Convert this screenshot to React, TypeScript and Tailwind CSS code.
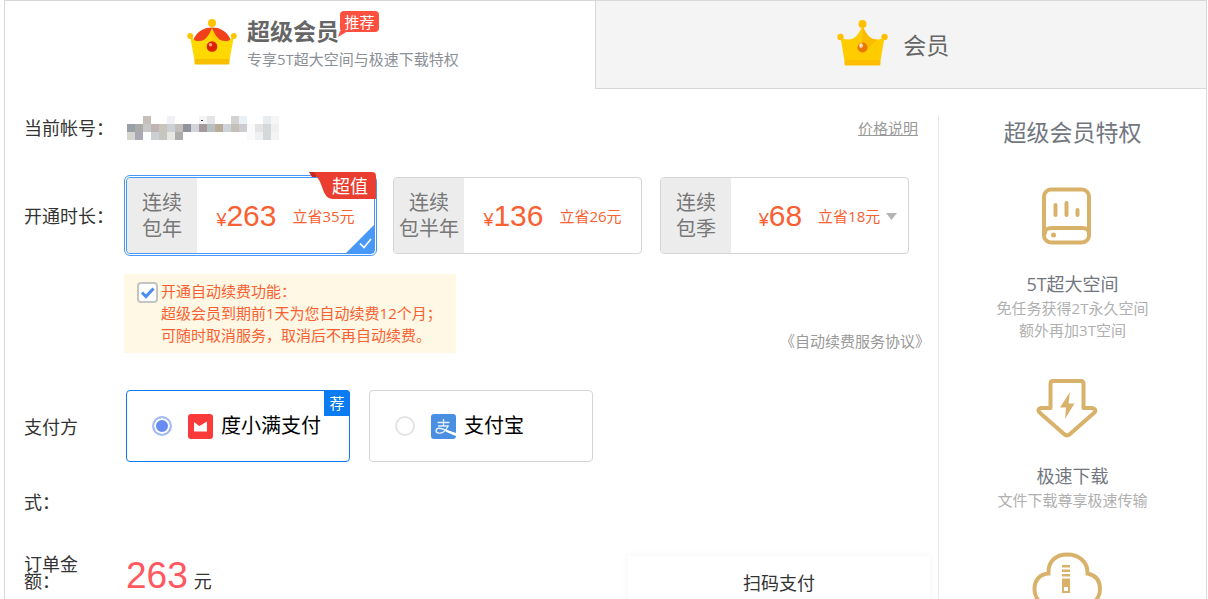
import { useState } from "react";
import type { ReactNode } from "react";

type Plan = {
  id: string;
  lines: [string, string];
  price: string;
  save: string;
  best?: boolean;
  more?: boolean;
};

const plans: Plan[] = [
  { id: "year", lines: ["连续", "包年"], price: "263", save: "立省35元", best: true },
  { id: "half", lines: ["连续", "包半年"], price: "136", save: "立省26元" },
  { id: "quarter", lines: ["连续", "包季"], price: "68", save: "立省18元", more: true },
];

function SuperCrown() {
  return (
    <svg viewBox="0 0 50 46" className="h-[46px] w-[50px]" aria-hidden="true">
      <path d="M6 22C9 13 16 8.500 25 8.500S41 13 44 22L25 25Z" fill="#f0401c" />
      <path d="M3 17L8 21.500Q13 23 17.500 20.500Q22 17 25 9Q28 17 32.500 20.500Q37 23 42 21.500L47 17L42.500 41H7.500Z" fill="#ffd800" />
      <path d="M25 9Q28 17 32.500 20.500L25 36Z" fill="#ffc400" opacity=".6" />
      <rect x="7.500" y="40" width="35" height="5.500" rx="1" fill="#f6c000" />
      <circle cx="25" cy="4" r="4" fill="#ffc400" />
      <circle cx="3.200" cy="17" r="3" fill="#ffc400" />
      <circle cx="46.800" cy="17" r="3" fill="#ffc400" />
      <circle cx="25" cy="27.500" r="5.300" fill="#dc2000" />
      <circle cx="23.500" cy="25.700" r="1.800" fill="#ff9c88" />
    </svg>
  );
}

function Crown() {
  return (
    <svg viewBox="0 0 51 46" className="h-[46px] w-[51px]" aria-hidden="true">
      <path d="M3.500 17Q6 19.500 11 19.500C18 19.500 21 15 25.500 6C30 15 33 19.500 40 19.500Q45 19.500 47.500 17L43.500 41H7.500Z" fill="#ffcc00" />
      <path d="M25.500 6C30 15 33 19.500 40 19.500L25.500 34Z" fill="#f9b000" opacity=".6" />
      <rect x="7.500" y="40" width="36" height="5.500" rx="1.500" fill="#ffbf00" />
      <circle cx="25.500" cy="4" r="4" fill="#ffc000" />
      <circle cx="3.500" cy="17" r="3.200" fill="#ffc000" />
      <circle cx="47.500" cy="17" r="3.200" fill="#ffc000" />
      <circle cx="25.500" cy="27.500" r="5" fill="#e87800" />
      <ellipse cx="24" cy="25.500" rx="1.800" ry="2.200" fill="#ffe0c8" />
    </svg>
  );
}

const mosaic: [number, number, string][] = [
  [2, 0, "#c5c0bb"], [5, 0, "#f1f1f5"], [9, 0, "#f4f4f4"], [10, 0, "#e4e4e6"], [13, 0, "#d2d2d2"],
  [14, 0, "#e9f0f6"], [17, 0, "#e8ecef"], [18, 0, "#f6f6f6"],
  [0, 1, "#98a0a8"], [1, 1, "#aaaaa8"], [2, 1, "#c8c8c8"], [3, 1, "#c0b4b4"],
  [4, 1, "#c8c6ba"], [5, 1, "#cccfd4"], [6, 1, "#c2bebd"], [7, 1, "#92929c"],
  [8, 1, "#d2d4dc"], [9, 1, "#a49a9a"], [10, 1, "#b8bec2"], [11, 1, "#b9ac98"],
  [12, 1, "#cdd4da"], [13, 1, "#c4c0b8"], [14, 1, "#cccbd0"], [15, 1, "#fafafb"],
  [16, 1, "#e4e4e4"], [17, 1, "#d4d8da"], [18, 1, "#f0f0f0"],
  [0, 2, "#d6d6d0"], [1, 2, "#aaa8b6"], [3, 2, "#cdd0d2"], [4, 2, "#c4c6c0"],
  [5, 2, "#e6e6e2"], [6, 2, "#acacac"], [15, 2, "#fafafa"], [16, 2, "#f0f0f2"],
  [17, 2, "#d4d8d8"], [18, 2, "#f4f4f4"],
];

function HiddenAccount() {
  return (
    <svg viewBox="0 0 152 24" className="h-6 w-[152px]" shapeRendering="crispEdges" aria-hidden="true">
      {mosaic.map(([x, y, fill]) => (
        <rect key={`${x}-${y}`} x={x * 8} y={y * 8} width="8" height="8" fill={fill} />
      ))}
      <rect x="74" y="4" width="2" height="1" fill="#333" />
    </svg>
  );
}

function PlanCard({ plan, checked, onSelect }: { plan: Plan; checked: boolean; onSelect: () => void }) {
  return (
    <label
      className={
        checked
          ? "relative flex h-[77px] w-[249px] cursor-pointer rounded-sm border border-[#4898f8] outline outline-offset-1 outline-[#4898f8]"
          : "relative flex h-[77px] w-[249px] cursor-pointer rounded border border-[#d5d5d5]"
      }
    >
      <input type="radio" name="plan" className="sr-only" checked={checked} onChange={onSelect} />
      <span className="flex w-[70px] shrink-0 flex-col items-center justify-center rounded-l-sm bg-[#ececec] text-xl leading-[26px] whitespace-nowrap text-[#777]">
        <span>{plan.lines[0]}</span>
        <span>{plan.lines[1]}</span>
      </span>
      <span className="flex flex-1 items-center justify-center gap-4 text-[#fa6032]">
        <span className="flex items-baseline font-['Liberation_Sans',sans-serif] text-[30px] leading-9">
          <span className="text-lg">¥</span>
          {plan.price}
        </span>
        <span className="relative pt-0.5 text-[15px]">
          {plan.save}
          {plan.more && (
            <svg viewBox="0 0 11 7" className="absolute top-2.5 left-full ml-1.5 h-[7px] w-[11px]" aria-hidden="true">
              <path d="M0 0H11L5.500 7Z" fill="#b4b4b4" />
            </svg>
          )}
        </span>
      </span>
      {plan.best && (
        <span className="absolute -top-1.5 -right-0.5 flex h-[27px] w-[67px] items-center justify-end pr-2 text-lg text-white">
          <svg viewBox="0 0 67 27" className="absolute inset-0 h-full w-full" aria-hidden="true">
            <path d="M0 0H63Q67 0 67 4V27H24C13 27 15 12 7 4Z" fill="#ea3e31" />
            <path d="M0 0H5L8 5H3Z" fill="#c42a20" />
          </svg>
          <span className="relative">超值</span>
        </span>
      )}
      {checked && (
        <svg viewBox="0 0 28 28" className="absolute right-0 bottom-0 h-7 w-7" aria-hidden="true">
          <path d="M28 0V28H0Z" fill="#4898f8" />
          <path d="M14 18.500L18 22.500L25 14" fill="none" stroke="#fff" strokeWidth="1.600" />
        </svg>
      )}
    </label>
  );
}

function PayOption({
  name, icon, checked, recommended, onSelect,
}: { name: string; icon: ReactNode; checked: boolean; recommended?: boolean; onSelect: () => void }) {
  return (
    <label
      className={
        checked
          ? "relative flex h-[72px] w-56 cursor-pointer items-center rounded-sm border border-[#0a7bf0] pl-[25px] text-xl text-black"
          : "relative flex h-[72px] w-56 cursor-pointer items-center rounded-sm border border-[#d5d5d5] pl-[25px] text-xl text-black"
      }
    >
      <input
        type="radio"
        name="pay"
        checked={checked}
        onChange={onSelect}
        className="mr-4 h-5 w-5 appearance-none rounded-full border-2 border-[#e4e4e4] bg-white checked:border-[#a6bcf6] checked:bg-[#668cf0] checked:shadow-[inset_0_0_0_2px_#fff]"
      />
      {icon}
      <span className="ml-2">{name}</span>
      {recommended && (
        <span className="absolute -top-px -right-px flex h-[26px] w-[26px] items-center justify-center rounded-tr-sm bg-[#0a7bf0] text-[15px] text-white">
          荐
        </span>
      )}
    </label>
  );
}

function DuIcon() {
  return (
    <svg viewBox="0 0 25 25" className="h-[25px] w-[25px]" aria-hidden="true">
      <rect width="25" height="25" rx="3" fill="#fb3a3a" />
      <path d="M6 8L10.500 11.500L11.500 12L19 7.500V17.500H6Z" fill="#fff" />
    </svg>
  );
}

function AliIcon() {
  return (
    <svg viewBox="0 0 25 25" className="h-[25px] w-[25px]" aria-hidden="true">
      <rect width="25" height="25" rx="3" fill="#4a90e2" />
      <g fill="none" stroke="#e4eefb" strokeLinecap="round">
        <path d="M7 8.500H18M12.500 5.500V12M7.500 12H17" strokeWidth="1.300" />
        <path d="M17 12C15 17 11 19.500 7.500 19C4 18.400 4.500 14.500 8 14.300C13 14.200 17 18 24 20" strokeWidth="1.400" />
      </g>
      <path d="M15 15.800L25 19V22C21 20.500 18 19 14.500 17.500Z" fill="#fff" />
    </svg>
  );
}

function DiskIcon() {
  return (
    <svg viewBox="0 0 50 58" className="h-[58px] w-[50px]" fill="none" stroke="#d8b26a" strokeLinecap="round" aria-hidden="true">
      <rect x="2" y="2.500" width="45" height="53" rx="7" strokeWidth="4" />
      <path d="M3 46C3 41 7 41 10 41H40C44 41 47 42 47 47" strokeWidth="4" />
      <path d="M13.500 18V28M24.500 16V28M35.500 23V28" strokeWidth="4" />
      <circle cx="11.500" cy="48" r="2.500" fill="#d8b26a" stroke="none" />
    </svg>
  );
}

function SpeedIcon() {
  return (
    <svg viewBox="0 0 62 60" className="h-[60px] w-[62px]" aria-hidden="true">
      <path
        d="M17 3H45Q47.500 3 47.500 6V30H56Q61 31 58.500 34.500L34 56Q31 59 28 56L3.500 34.500Q1 31 5 30H14.500V6Q14.500 3 17 3Z"
        fill="none" stroke="#d8b26a" strokeWidth="4" strokeLinejoin="round"
      />
      <path d="M34 14L24 29.500H30L29 41L38.500 25.500H32.500Z" fill="#d8b26a" />
    </svg>
  );
}

function CloudIcon() {
  return (
    <svg viewBox="0 0 70 60" className="h-[60px] w-[70px]" aria-hidden="true">
      <path
        d="M18 57C8 57 2.500 50 2.500 41C2.500 32 8 26 16.500 25.500C16 13 24 6.500 35.500 6.500C47 6.500 56 14 55.500 25.500C63 27 68 32 68 41C68 50 62 57 52 57Z"
        fill="none" stroke="#d8b26a" strokeWidth="4"
      />
      <path d="M30 17H38V19.500H30ZM30 21.500H38V24H30ZM30 26H38V28.500H30Z" fill="#d8b26a" />
      <path fillRule="evenodd" d="M30 30.500H38V45H30ZM32 39V43H36V39Z" fill="#d8b26a" />
    </svg>
  );
}

function Privilege({ icon, title, lines = [] }: { icon: ReactNode; title?: string; lines?: string[] }) {
  return (
    <li className="flex flex-col items-center">
      <span className="flex h-[60px] items-center justify-center pr-3">{icon}</span>
      {title && <h3 className="mt-[25px] text-lg leading-[26px] text-[#72777f]">{title}</h3>}
      {lines.map((line) => (
        <p key={line} className="text-[15px] leading-[22px] text-[#b0b0b0]">{line}</p>
      ))}
    </li>
  );
}

export default function App() {
  const [plan, setPlan] = useState("year");
  const [pay, setPay] = useState("du");
  const [renew, setRenew] = useState(true);

  return (
    <div className="h-screen overflow-hidden bg-white pr-px pl-1 font-['Open_Sans','Noto_Sans_CJK_SC',sans-serif] text-[#333]">
      <div className="flex min-h-full flex-col border-x border-t border-[#d8d8d8]">
        <nav className="flex h-[88px]">
          <button type="button" className="flex w-[49.1%] items-start justify-center gap-2.5 pt-[18px] pl-[46px] text-left">
            <SuperCrown />
            <span className="flex flex-col">
              <span className="relative self-start text-[23px] leading-6 font-bold text-[#666]">
                超级会员
                <span className="absolute -top-2 left-full ml-px flex h-[21px] w-[39px] items-center justify-center rounded-sm bg-[#ff5040] text-[15px] font-normal text-white">
                  <svg viewBox="0 0 10 6" className="absolute top-full -left-0.5 -mt-px h-1.5 w-2.5" aria-hidden="true">
                    <path d="M2 0H10L0 6Z" fill="#ff5040" />
                  </svg>
                  <span className="whitespace-nowrap">推荐</span>
                </span>
              </span>
              <span className="mt-[5px] text-[15px] leading-[22px] text-[#8b9096]">专享5T超大空间与极速下载特权</span>
            </span>
          </button>
          <button type="button" className="flex flex-1 items-start justify-center gap-[15px] border-b border-l border-[#d8d8d8] bg-[#f4f4f4] pt-[19px] pr-[15px] text-[23px] text-[#666]">
            <Crown />
            <span className="leading-[50px]">会员</span>
          </button>
        </nav>

        <div className="flex flex-1 pt-[26px]">
          <main className="flex-1 pr-2 pl-[19px]">
            <div className="flex h-[26px] items-center">
              <span className="w-[103px] text-lg whitespace-nowrap">当前帐号：</span>
              <HiddenAccount />
              <a href="#price" className="mr-3 ml-auto text-[15px] leading-5 text-[#999] underline">价格说明</a>
            </div>

            <div className="mt-9 flex items-center">
              <span className="w-[102px] text-lg whitespace-nowrap">开通时长：</span>
              <div className="flex gap-[18px]">
                {plans.map((p) => (
                  <PlanCard key={p.id} plan={p} checked={plan === p.id} onSelect={() => setPlan(p.id)} />
                ))}
              </div>
            </div>

            <div className="mt-5 flex items-end justify-between pl-[100px]">
              <label className="flex w-[332px] cursor-pointer items-start bg-[#fff8e4] pt-1.5 pb-[7px] pl-[13px] text-[15px] leading-[22px] whitespace-nowrap text-[#fa6032]">
                <span className="relative mt-0.5 mr-[3px] h-[21px] w-[21px] shrink-0">
                  <input
                    type="checkbox"
                    checked={renew}
                    onChange={() => setRenew(!renew)}
                    className="block h-full w-full appearance-none rounded border-2 border-[#c4c4c4] bg-white"
                  />
                  {renew && (
                    <svg viewBox="0 0 21 21" className="pointer-events-none absolute inset-0 h-full w-full" aria-hidden="true">
                      <path d="M5 10.500L9 14.500L16.500 6.500" fill="none" stroke="#4a8cf6" strokeWidth="3" />
                    </svg>
                  )}
                </span>
                <span>
                  开通自动续费功能：<br />
                  超级会员到期前1天为您自动续费12个月；<br />
                  可随时取消服务，取消后不再自动续费。
                </span>
              </label>
              <a href="#agreement" className="text-[15px] leading-6 text-[#999]">《自动续费服务协议》</a>
            </div>

            <div className="mt-[37px] flex items-start">
              <span className="mr-8 w-[70px] text-lg leading-[75px]">支付方式：</span>
              <div className="flex gap-[19px]">
                <PayOption name="度小满支付" icon={<DuIcon />} checked={pay === "du"} recommended onSelect={() => setPay("du")} />
                <PayOption name="支付宝" icon={<AliIcon />} checked={pay === "ali"} onSelect={() => setPay("ali")} />
              </div>
            </div>

            <div className="mt-4 flex items-start">
              <span className="mr-8 w-[70px] text-lg leading-[17px]">订单金额：</span>
              <p className="flex items-baseline gap-1.5 text-lg leading-10">
                <span className="font-['Liberation_Sans',sans-serif] text-[37px] text-[#ff5860]">263</span>
                元
              </p>
              <section className="ml-auto h-60 w-[302px] pt-3.5 text-center text-lg leading-[26px] shadow-[0_0_8px_rgba(0,0,0,0.05)]">
                扫码支付
              </section>
            </div>
          </main>

          <aside className="w-[268px] border-l border-[#e8e8e8]">
            <h2 className="text-center text-[23px] leading-[34px] text-[#72777f]">超级会员特权</h2>
            <ul className="mt-[37px] flex flex-col gap-[37px]">
              <Privilege icon={<DiskIcon />} title="5T超大空间" lines={["免任务获得2T永久空间", "额外再加3T空间"]} />
              <Privilege icon={<SpeedIcon />} title="极速下载" lines={["文件下载尊享极速传输"]} />
              <Privilege icon={<CloudIcon />} />
            </ul>
          </aside>
        </div>
      </div>
    </div>
  );
}
